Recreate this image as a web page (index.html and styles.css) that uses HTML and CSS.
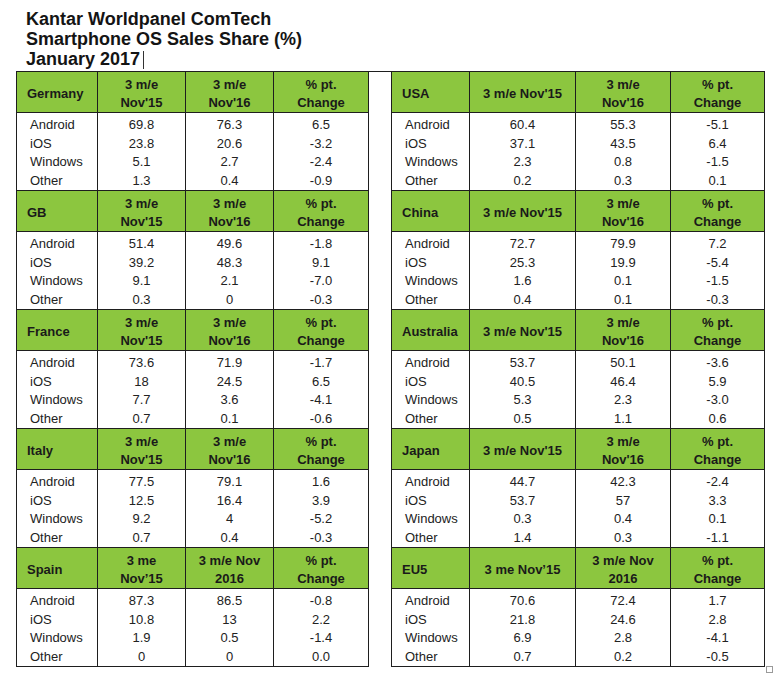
FILE: index.html
```html
<!DOCTYPE html>
<html>
<head>
<meta charset="utf-8">
<link rel="stylesheet" href="styles.css">
</head>
<body>
<div class="page">
  <h1 class="title">Kantar Worldpanel ComTech<br>Smartphone OS Sales Share (%)<br>January 2017<span class="caret"></span></h1>
  <table class="share">
    <colgroup>
      <col class="c-os-l"><col class="c-a-l"><col class="c-b-l"><col class="c-c-l">
      <col class="c-gap">
      <col class="c-os-r"><col class="c-a-r"><col class="c-b-r"><col class="c-c-r">
    </colgroup>
    <tr class="head">
      <td class="country">Germany</td><td>3 m/e<br>Nov'15</td><td>3 m/e<br>Nov'16</td><td>% pt.<br>Change</td>
      <td class="gap" rowspan="10"></td>
      <td class="country">USA</td><td>3 m/e Nov'15</td><td>3 m/e<br>Nov'16</td><td>% pt.<br>Change</td>
    </tr>
    <tr class="data">
      <td class="os">Android<br>iOS<br>Windows<br>Other</td><td>69.8<br>23.8<br>5.1<br>1.3</td><td>76.3<br>20.6<br>2.7<br>0.4</td><td>6.5<br>-3.2<br>-2.4<br>-0.9</td>
      <td class="os">Android<br>iOS<br>Windows<br>Other</td><td>60.4<br>37.1<br>2.3<br>0.2</td><td>55.3<br>43.5<br>0.8<br>0.3</td><td>-5.1<br>6.4<br>-1.5<br>0.1</td>
    </tr>
    <tr class="head">
      <td class="country">GB</td><td>3 m/e<br>Nov'15</td><td>3 m/e<br>Nov'16</td><td>% pt.<br>Change</td>
      <td class="country">China</td><td>3 m/e Nov'15</td><td>3 m/e<br>Nov'16</td><td>% pt.<br>Change</td>
    </tr>
    <tr class="data">
      <td class="os">Android<br>iOS<br>Windows<br>Other</td><td>51.4<br>39.2<br>9.1<br>0.3</td><td>49.6<br>48.3<br>2.1<br>0</td><td>-1.8<br>9.1<br>-7.0<br>-0.3</td>
      <td class="os">Android<br>iOS<br>Windows<br>Other</td><td>72.7<br>25.3<br>1.6<br>0.4</td><td>79.9<br>19.9<br>0.1<br>0.1</td><td>7.2<br>-5.4<br>-1.5<br>-0.3</td>
    </tr>
    <tr class="head">
      <td class="country">France</td><td>3 m/e<br>Nov'15</td><td>3 m/e<br>Nov'16</td><td>% pt.<br>Change</td>
      <td class="country">Australia</td><td>3 m/e Nov'15</td><td>3 m/e<br>Nov'16</td><td>% pt.<br>Change</td>
    </tr>
    <tr class="data">
      <td class="os">Android<br>iOS<br>Windows<br>Other</td><td>73.6<br>18<br>7.7<br>0.7</td><td>71.9<br>24.5<br>3.6<br>0.1</td><td>-1.7<br>6.5<br>-4.1<br>-0.6</td>
      <td class="os">Android<br>iOS<br>Windows<br>Other</td><td>53.7<br>40.5<br>5.3<br>0.5</td><td>50.1<br>46.4<br>2.3<br>1.1</td><td>-3.6<br>5.9<br>-3.0<br>0.6</td>
    </tr>
    <tr class="head">
      <td class="country">Italy</td><td>3 m/e<br>Nov'15</td><td>3 m/e<br>Nov'16</td><td>% pt.<br>Change</td>
      <td class="country">Japan</td><td>3 m/e Nov'15</td><td>3 m/e<br>Nov'16</td><td>% pt.<br>Change</td>
    </tr>
    <tr class="data">
      <td class="os">Android<br>iOS<br>Windows<br>Other</td><td>77.5<br>12.5<br>9.2<br>0.7</td><td>79.1<br>16.4<br>4<br>0.4</td><td>1.6<br>3.9<br>-5.2<br>-0.3</td>
      <td class="os">Android<br>iOS<br>Windows<br>Other</td><td>44.7<br>53.7<br>0.3<br>1.4</td><td>42.3<br>57<br>0.4<br>0.3</td><td>-2.4<br>3.3<br>0.1<br>-1.1</td>
    </tr>
    <tr class="head">
      <td class="country">Spain</td><td>3 me<br>Nov’15</td><td>3 m/e Nov<br>2016</td><td>% pt.<br>Change</td>
      <td class="country">EU5</td><td>3 me Nov’15</td><td>3 m/e Nov<br>2016</td><td>% pt.<br>Change</td>
    </tr>
    <tr class="data">
      <td class="os">Android<br>iOS<br>Windows<br>Other</td><td>87.3<br>10.8<br>1.9<br>0</td><td>86.5<br>13<br>0.5<br>0</td><td>-0.8<br>2.2<br>-1.4<br>0.0</td>
      <td class="os">Android<br>iOS<br>Windows<br>Other</td><td>70.6<br>21.8<br>6.9<br>0.7</td><td>72.4<br>24.6<br>2.8<br>0.2</td><td>1.7<br>2.8<br>-4.1<br>-0.5</td>
    </tr>
  </table>
  <span class="handle"></span>
</div>
</body>
</html>
```

FILE: styles.css
```css
html, body {
  margin: 0;
  padding: 0;
  background: #ffffff;
}

.page {
  position: relative;
  width: 784px;
  height: 684px;
  padding: 9px 0 0 16px;
  box-sizing: border-box;
  font-family: "Liberation Sans", Arial, sans-serif;
  color: #1a1a1a;
}

.title {
  margin: 0 0 2px 10px;
  font-size: 18px;
  line-height: 20px;
  font-weight: bold;
  color: #141414;
}

.caret {
  display: inline-block;
  width: 0;
  height: 18px;
  margin-left: 3px;
  border-left: 1px solid #333;
  vertical-align: -4px;
}

.share {
  border-collapse: collapse;
  table-layout: fixed;
  width: 749px;
  font-size: 13px;
}

.c-os-l { width: 81px; }
.c-a-l { width: 88px; }
.c-b-l { width: 88px; }
.c-c-l { width: 95px; }
.c-gap { width: 23px; }
.c-os-r { width: 78px; }
.c-a-r { width: 106px; }
.c-b-r { width: 95px; }
.c-c-r { width: 94px; }

.share td {
  border: 1px solid #1e1e1e;
  text-align: center;
  padding: 0;
}

.head td {
  background: #8cc63f;
  font-weight: bold;
  line-height: 18px;
  height: 36px;
  padding: 4px 0 0;
  vertical-align: middle;
  color: #1a1a1a;
}

.head td.country {
  text-align: left;
  padding-left: 10px;
}

.data td {
  line-height: 18.5px;
  padding: 3px 0 0;
  vertical-align: top;
  color: #222;
}

.data td.os {
  text-align: left;
  padding-left: 13px;
}

.share td.gap {
  background: #ffffff;
  border-bottom: none;
  padding: 0;
}

.handle {
  position: absolute;
  left: 766px;
  top: 666px;
  width: 5px;
  height: 5px;
  border: 1px solid #9a9a9a;
  background: #fff;
}
```
